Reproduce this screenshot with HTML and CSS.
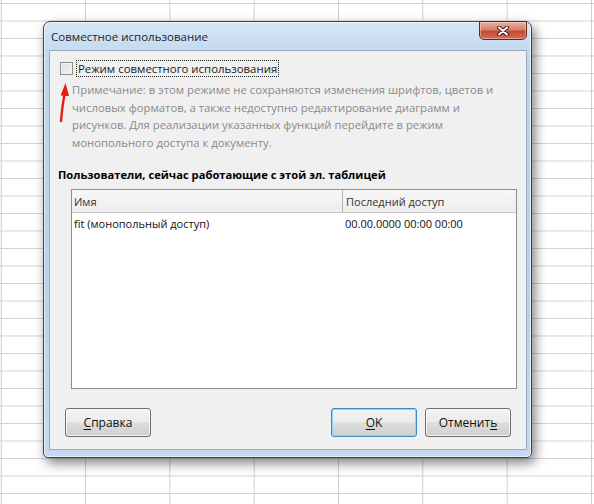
FILE: index.html
```html
<!DOCTYPE html>
<html lang="ru">
<head>
  <meta charset="UTF-8" />
  <meta name="viewport" content="width=device-width, initial-scale=1.0" />
  <title>Совместное использование</title>
  <link rel="stylesheet" href="styles.css">
</head>
<body>

  <!-- spreadsheet grid behind the dialog -->
  <div class="sheet">

    <div class="window">
      <div class="titlebar">
        <span class="title">Совместное использование</span>
        <button class="close" aria-label="Закрыть">
          <svg width="12" height="10" viewBox="0 0 12 10">
            <path d="M2 1.5 L10 8.5 M10 1.5 L2 8.5" stroke="#4a1a14" stroke-width="4" stroke-linecap="round" />
            <path d="M2 1.5 L10 8.5 M10 1.5 L2 8.5" stroke="#fff" stroke-width="2" stroke-linecap="round" />
          </svg>
        </button>
      </div>

      <div class="client">
        <!-- red hint arrow drawn over the dialog -->
        <svg class="arrow" width="20" height="45" viewBox="0 0 20 45">
          <path d="M6 41 Q7 28 9.6 13" stroke="#e31b14" stroke-width="2.4" fill="none" stroke-linecap="round" />
          <polygon points="10.5,3 5.6,15.5 14,16" fill="#e31b14" />
        </svg>

        <label class="option">
          <span class="checkbox"></span>
          <span class="option-text">Режим совместного использования</span>
        </label>

        <p class="note">
          Примечание: в этом режиме не сохраняются изменения шрифтов, цветов и<br>
          числовых форматов, а также недоступно редактирование диаграмм и<br>
          рисунков. Для реализации указанных функций перейдите в режим<br>
          монопольного доступа к документу.
        </p>

        <div class="users-label">Пользователи, сейчас работающие с этой эл. таблицей</div>

        <div class="users">
          <div class="users-row users-head">
            <div class="col-name">Имя</div>
            <div class="col-access">Последний доступ</div>
          </div>
          <div class="users-row">
            <div class="col-name">fit (монопольный доступ)</div>
            <div class="col-access">00.00.0000 00:00 00:00</div>
          </div>
        </div>

        <div class="buttons">
          <button class="btn"><u>С</u>правка</button>
          <span class="spacer"></span>
          <button class="btn btn-default"><u>О</u>K</button>
          <button class="btn">Отменит<u>ь</u></button>
        </div>
      </div>
    </div>

  </div>

</body>
</html>
```

FILE: styles.css
```css
body {
  margin: 0;
  font-family: 'Open Sans', 'Noto Sans', sans-serif;
  font-size: 11px;
  color: #1a1a1a;
}

.sheet {
  height: 504px;
  box-sizing: border-box;
  padding: 21px 0 0 43px;
  overflow: hidden;
  background-color: #fff;
  background-image:
    linear-gradient(to right, #cfcfcf 1px, transparent 1px),
    linear-gradient(to bottom, #d2d2d2 1px, transparent 1px);
  background-size: 84.33px 17.5px;
  background-position: 0.7px 3px;
}

.window {
  width: 489px;
  height: 437px;
  box-sizing: border-box;
  display: flex;
  flex-direction: column;
  border: 1px solid #3b4350;
  border-radius: 7px 7px 5px 5px;
  background: linear-gradient(to bottom, #d6e6f6 0%, #bdd5ee 40px, #b9d1ec 60%, #c4daf0 100%);
  box-shadow: 3px 5px 12px rgba(0, 0, 0, 0.5), inset 0 0 0 1px rgba(255, 255, 255, 0.6);
}

.titlebar {
  height: 28px;
  display: flex;
  align-items: flex-start;
}

.title {
  align-self: center;
  margin-left: 7px;
  font-size: 11.5px;
  color: #1e1e1e;
  flex: 1;
}

.close {
  margin: -1px 4px 0 0;
  width: 48px;
  height: 19px;
  padding: 0;
  display: flex;
  align-items: center;
  justify-content: center;
  border: 1px solid #5b2a22;
  border-radius: 0 0 5px 5px;
  background: linear-gradient(to bottom, #eab1a3 0%, #d7806c 45%, #c54a34 55%, #d3705a 100%);
  box-shadow: inset 0 0 0 1px rgba(255, 220, 210, 0.45);
}

.client {
  position: relative;
  flex: 1;
  margin: 0 4px 7px 5px;
  display: flex;
  flex-direction: column;
  background: #f0f0f0;
  border: 1px solid #97a9bd;
}

.arrow {
  position: absolute;
  left: 5px;
  top: 29px;
}

.option {
  display: flex;
  align-items: center;
  gap: 3px;
  height: 17px;
  margin: 9px 0 0 10px;
}

.checkbox {
  width: 11px;
  height: 11px;
  border: 1px solid #8e8f8f;
  background: linear-gradient(135deg, #dcdcdc, #f7f7f7);
  box-shadow: inset 0 0 0 1px #f4f4f4;
}

.option-text {
  font-size: 11.4px;
  border: 1px dotted #222;
  padding: 0 1px;
  line-height: 15px;
}

.note {
  margin: 4px 0 0 22px;
  line-height: 17.5px;
  color: #8a8a8a;
  font-size: 11.3px;
}

.users-label {
  margin: 15px 0 0 8px;
  line-height: 17px;
  font-weight: bold;
  font-size: 11.2px;
  color: #000;
}

.users {
  margin: 6px 9px 0 21px;
  height: 200px;
  box-sizing: border-box;
  border: 1px solid #8b8e93;
  background: #fff;
}

.users-row {
  display: flex;
  height: 21px;
  align-items: center;
  color: #111;
}

.users-head {
  height: 22px;
  background: linear-gradient(to bottom, #f7f7f7, #ededed);
  border-bottom: 1px solid #c8c8c8;
  color: #333;
}

.col-name {
  width: 268px;
  padding-left: 2px;
  align-self: stretch;
  display: flex;
  align-items: center;
}

.users-head .col-name {
  border-right: 1px solid #b4b4b4;
}

.col-access {
  padding-left: 3px;
}

.buttons {
  display: flex;
  gap: 8px;
  margin: 19px 15px 0 15px;
}

.spacer {
  flex: 1;
}

.btn {
  width: 86px;
  height: 29px;
  font-family: inherit;
  font-size: 12px;
  color: #111;
  border: 1px solid #707070;
  border-radius: 3px;
  background: linear-gradient(to bottom, #f3f3f3 0%, #ebebeb 48%, #dddddd 52%, #cfcfcf 100%);
  box-shadow: inset 0 0 0 1px rgba(255, 255, 255, 0.7);
}

.btn u {
  text-underline-offset: 2px;
}

.btn-default {
  border-color: #3c8ac0;
  box-shadow: inset 0 0 0 1px #8fd3f5;
}
```
